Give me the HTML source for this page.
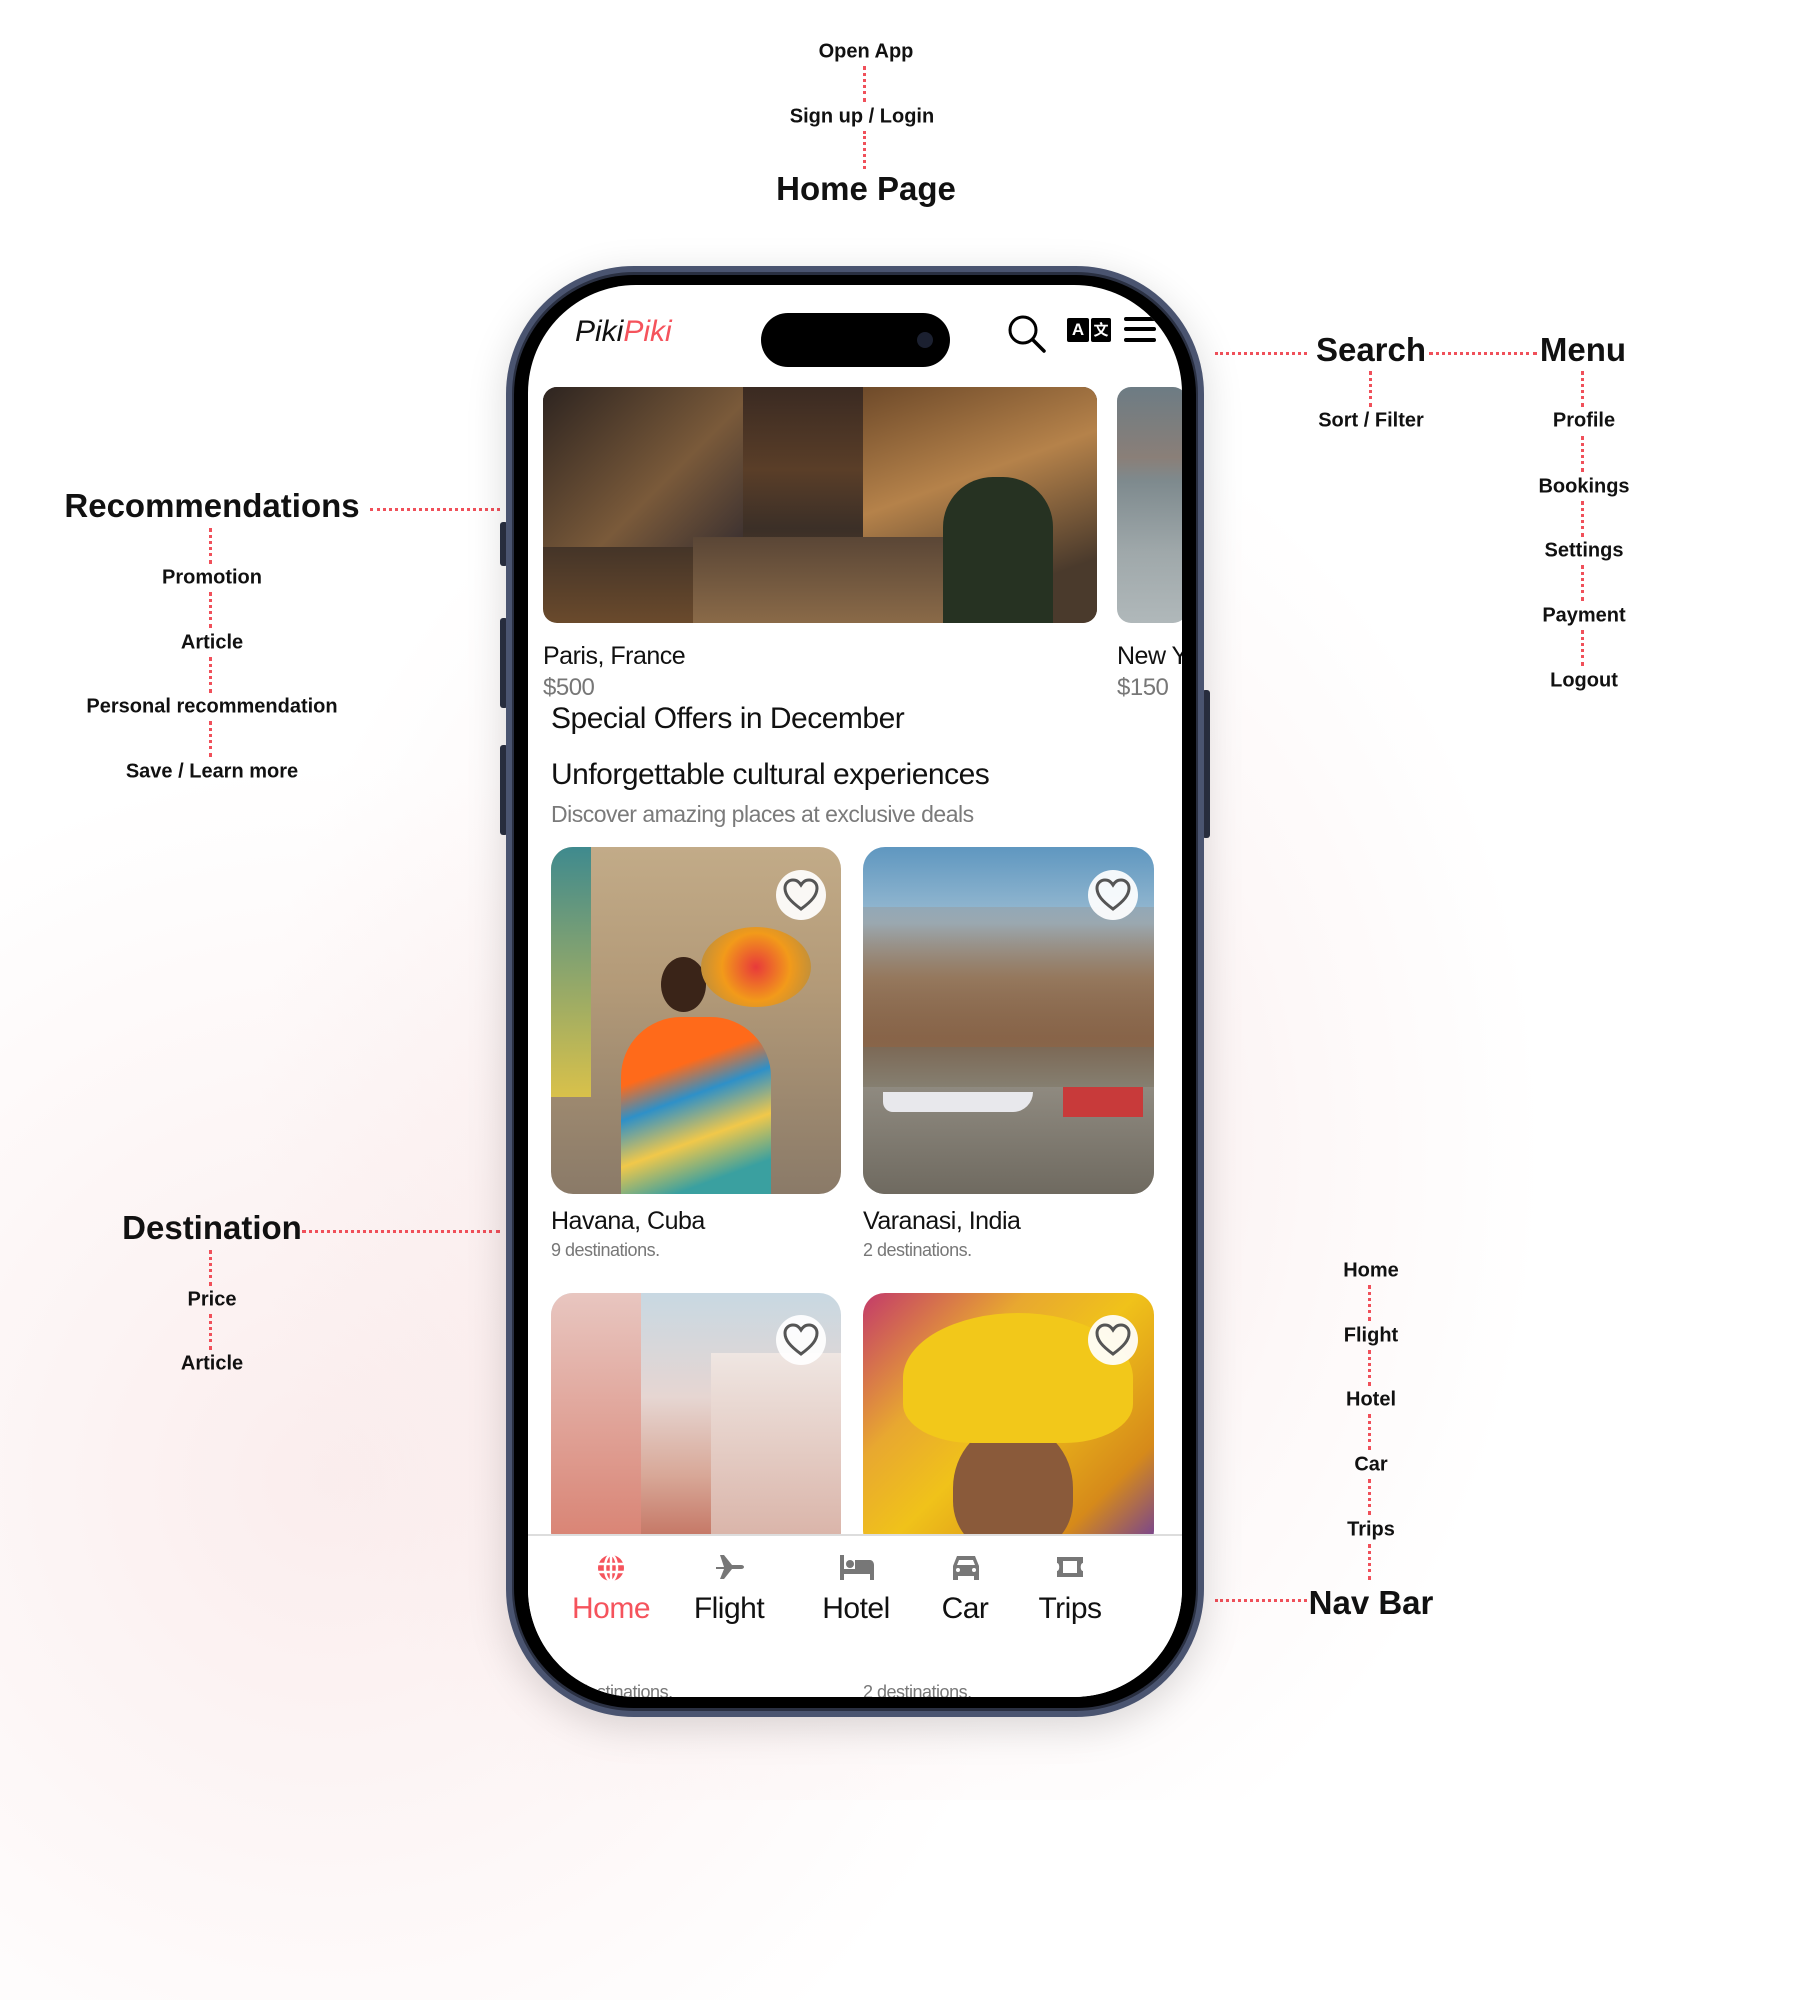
<!DOCTYPE html>
<html><head><meta charset="utf-8"><style>
*{margin:0;padding:0;box-sizing:border-box}
body{width:1800px;height:1800px;position:relative;overflow:hidden;background:#fff;font-family:"Liberation Sans",sans-serif}
.glow{position:absolute;left:250px;top:350px;width:1300px;height:1450px;background:radial-gradient(ellipse at 50% 55%,rgba(240,200,200,.45),rgba(245,220,220,.2) 45%,rgba(255,255,255,0) 70%)}
.glow2{position:absolute;left:-300px;top:700px;width:1400px;height:1300px;background:radial-gradient(ellipse at 45% 60%,rgba(245,215,215,.45),rgba(255,255,255,0) 65%)}
.t{position:absolute;transform:translate(-50%,-50%);white-space:nowrap;color:#111;font-weight:bold}
.s{font-size:20px}
.h{font-size:33px}
.vd{position:absolute;width:3px;border-left:3px dotted #f0505a}
.hd{position:absolute;height:3px;border-top:3px dotted #f0505a}
.phone{position:absolute;left:506px;top:266px;width:698px;height:1451px;border-radius:128px;background:#2a3042;border:6px solid #4a5470;box-shadow:0 10px 40px rgba(0,0,0,.15)}
.bezel{position:absolute;left:514px;top:275px;width:682px;height:1433px;border-radius:120px;background:#000}
.screen{position:absolute;left:528px;top:285px;width:654px;height:1412px;border-radius:108px;background:#fff;overflow:hidden}
.screen *{position:absolute}
.btn{position:absolute;background:#2a3042;width:8px;border-radius:3px}
.ui{font-family:"Liberation Sans",sans-serif;letter-spacing:-.5px;white-space:nowrap}
.heart{width:50px;height:50px;border-radius:50%;background:rgba(255,255,255,.92)}
</style></head><body>
<div class="glow2"></div>
<div class="glow"></div>

<div class="t s" style="left:866px;top:52px">Open App</div>
<div class="vd" style="left:863px;top:66px;height:36px"></div>
<div class="t s" style="left:862px;top:117px">Sign up / Login</div>
<div class="vd" style="left:863px;top:131px;height:38px"></div>
<div class="t h" style="left:866px;top:189px">Home Page</div>

<div class="t h" style="left:1371px;top:350px">Search</div>
<div class="t h" style="left:1583px;top:350px">Menu</div>
<div class="hd" style="left:1215px;top:352px;width:92px"></div>
<div class="hd" style="left:1429px;top:352px;width:108px"></div>
<div class="vd" style="left:1369px;top:371px;height:36px"></div>
<div class="t s" style="left:1371px;top:421px">Sort / Filter</div>
<div class="vd" style="left:1581px;top:371px;height:36px"></div>
<div class="t s" style="left:1584px;top:421px">Profile</div>
<div class="vd" style="left:1581px;top:436px;height:36px"></div>
<div class="t s" style="left:1584px;top:487px">Bookings</div>
<div class="vd" style="left:1581px;top:501px;height:36px"></div>
<div class="t s" style="left:1584px;top:551px">Settings</div>
<div class="vd" style="left:1581px;top:565px;height:36px"></div>
<div class="t s" style="left:1584px;top:616px">Payment</div>
<div class="vd" style="left:1581px;top:630px;height:36px"></div>
<div class="t s" style="left:1584px;top:681px">Logout</div>

<div class="t h" style="left:212px;top:506px">Recommendations</div>
<div class="hd" style="left:370px;top:508px;width:130px"></div>
<div class="vd" style="left:209px;top:528px;height:36px"></div>
<div class="t s" style="left:212px;top:578px">Promotion</div>
<div class="vd" style="left:209px;top:592px;height:36px"></div>
<div class="t s" style="left:212px;top:643px">Article</div>
<div class="vd" style="left:209px;top:657px;height:36px"></div>
<div class="t s" style="left:212px;top:707px">Personal recommendation</div>
<div class="vd" style="left:209px;top:721px;height:36px"></div>
<div class="t s" style="left:212px;top:772px">Save / Learn more</div>

<div class="t h" style="left:212px;top:1228px">Destination</div>
<div class="hd" style="left:302px;top:1230px;width:198px"></div>
<div class="vd" style="left:209px;top:1250px;height:36px"></div>
<div class="t s" style="left:212px;top:1300px">Price</div>
<div class="vd" style="left:209px;top:1314px;height:36px"></div>
<div class="t s" style="left:212px;top:1364px">Article</div>

<div class="t s" style="left:1371px;top:1271px">Home</div>
<div class="vd" style="left:1368px;top:1285px;height:36px"></div>
<div class="t s" style="left:1371px;top:1336px">Flight</div>
<div class="vd" style="left:1368px;top:1350px;height:36px"></div>
<div class="t s" style="left:1371px;top:1400px">Hotel</div>
<div class="vd" style="left:1368px;top:1414px;height:36px"></div>
<div class="t s" style="left:1371px;top:1465px">Car</div>
<div class="vd" style="left:1368px;top:1479px;height:36px"></div>
<div class="t s" style="left:1371px;top:1530px">Trips</div>
<div class="vd" style="left:1368px;top:1544px;height:36px"></div>
<div class="t h" style="left:1371px;top:1603px">Nav Bar</div>
<div class="hd" style="left:1215px;top:1599px;width:92px"></div>

<div class="btn" style="left:500px;top:522px;height:44px"></div>
<div class="btn" style="left:500px;top:618px;height:90px"></div>
<div class="btn" style="left:500px;top:745px;height:90px"></div>
<div class="btn" style="left:1202px;top:690px;height:148px"></div>
<div class="phone"></div>
<div class="bezel"></div>
<div class="screen">
  <div class="ui" style="left:47px;top:30px;font-size:30px;font-style:italic;letter-spacing:0"><span style="position:static;color:#111">Piki</span><span style="position:static;color:#f5535c">Piki</span></div>
  <div style="left:233px;top:28px;width:189px;height:54px;border-radius:27px;background:#000"></div>
  <div style="left:389px;top:47px;width:16px;height:16px;border-radius:50%;background:#1b2030"></div>
  <svg style="left:478px;top:28px" width="44" height="44" viewBox="0 0 44 44"><circle cx="17" cy="17" r="13" fill="none" stroke="#000" stroke-width="3"/><path d="M27 27 L38 38" stroke="#000" stroke-width="3.5" stroke-linecap="round"/></svg>
  <div style="left:539px;top:33px;width:22px;height:24px;background:#000;border-radius:2px;color:#fff;font:bold 17px 'Liberation Sans';text-align:center;line-height:24px">A</div>
  <div style="left:563px;top:33px;width:20px;height:24px;background:#000;border-radius:2px;color:#fff;font:bold 15px 'Noto Sans CJK SC',sans-serif;text-align:center;line-height:24px">文</div>
  <div style="left:596px;top:32px;width:32px;height:4px;background:#000;border-radius:2px"></div>
  <div style="left:596px;top:42px;width:32px;height:4px;background:#000;border-radius:2px"></div>
  <div style="left:596px;top:53px;width:32px;height:4px;background:#000;border-radius:2px"></div>

  <div style="left:15px;top:102px;width:554px;height:236px;border-radius:14px;overflow:hidden;background:linear-gradient(180deg,#3a2a22 0%,#5a3e28 35%,#3b2f27 60%,#6a4a2c 100%)">
    <div style="left:0;top:0;width:200px;height:160px;background:linear-gradient(135deg,#2d2420,#7a5a3a 60%,#3a3030)"></div>
    <div style="left:320px;top:0;width:234px;height:236px;background:linear-gradient(160deg,#6e4a2a,#b5824a 40%,#4a3a2c 80%)"></div>
    <div style="left:150px;top:150px;width:260px;height:86px;background:linear-gradient(180deg,#5a4636,#8a6a48)"></div>
    <div style="left:400px;top:90px;width:110px;height:146px;border-radius:50px 50px 0 0;background:#263222"></div>
  </div>
  <div style="left:589px;top:102px;width:70px;height:236px;border-radius:14px;overflow:hidden;background:linear-gradient(180deg,#6d7c84 0%,#8a7f78 30%,#7e8a8e 40%,#9fa8aa 70%,#b0b8ba 100%)"></div>

  <div class="ui" style="left:15px;top:357px;font-size:25px;color:#111">Paris, France</div>
  <div class="ui" style="left:15px;top:389px;font-size:24px;color:#777">$500</div>
  <div class="ui" style="left:589px;top:357px;font-size:25px;color:#111">New Y</div>
  <div class="ui" style="left:589px;top:389px;font-size:24px;color:#777">$150</div>
  <div class="ui" style="left:23px;top:417px;font-size:30px;color:#111">Special Offers in December</div>
  <div class="ui" style="left:23px;top:473px;font-size:30px;color:#111">Unforgettable cultural experiences</div>
  <div class="ui" style="left:23px;top:516px;font-size:23px;color:#7a7a7a">Discover amazing places at exclusive deals</div>

  <div style="left:23px;top:562px;width:290px;height:347px;border-radius:22px;overflow:hidden;background:linear-gradient(180deg,#c2ab88 0%,#b39a78 40%,#8a7a68 100%)">
    <div style="left:0;top:0;width:40px;height:250px;background:linear-gradient(180deg,#3f8a8e,#d9c14a)"></div>
    <div style="left:70px;top:170px;width:150px;height:177px;border-radius:60px 60px 0 0;background:linear-gradient(160deg,#ff6a1a 0%,#ff6a1a 30%,#2e90c8 45%,#f1c84a 65%,#3aa0a0 85%)"></div>
    <div style="left:110px;top:110px;width:45px;height:55px;border-radius:50%;background:#3a2418"></div>
    <div style="left:150px;top:80px;width:110px;height:80px;border-radius:50%;background:radial-gradient(circle,#e83a3a,#f29a1a 50%,#a88a4a)"></div>
  </div>
  <div class="heart" style="left:248px;top:585px"></div>
  <svg style="left:254px;top:592px" width="38" height="36" viewBox="0 0 38 36"><path d="M19 32 C8 24 3 18 3 11 C3 6 7 3 11 3 C15 3 17 5 19 8 C21 5 23 3 27 3 C31 3 35 6 35 11 C35 18 30 24 19 32Z" fill="none" stroke="#555" stroke-width="3"/></svg>

  <div style="left:335px;top:562px;width:291px;height:347px;border-radius:22px;overflow:hidden;background:linear-gradient(180deg,#5f97c0 0%,#9bbcd2 22%,#9a8870 38%,#7a6450 55%,#8a8a7e 75%,#6b6a5e 100%)">
    <div style="left:0;top:60px;width:291px;height:140px;background:linear-gradient(180deg,rgba(160,120,90,.2),rgba(140,100,70,.8))"></div>
    <div style="left:0;top:240px;width:291px;height:107px;background:linear-gradient(180deg,#8f8a80,#6f6a60)"></div>
    <div style="left:20px;top:245px;width:150px;height:20px;background:#e8e8ec;border-radius:0 0 40px 20px"></div>
    <div style="left:200px;top:240px;width:80px;height:30px;background:#c83a3a"></div>
  </div>
  <div class="heart" style="left:560px;top:585px"></div>
  <svg style="left:566px;top:592px" width="38" height="36" viewBox="0 0 38 36"><path d="M19 32 C8 24 3 18 3 11 C3 6 7 3 11 3 C15 3 17 5 19 8 C21 5 23 3 27 3 C31 3 35 6 35 11 C35 18 30 24 19 32Z" fill="none" stroke="#555" stroke-width="3"/></svg>

  <div class="ui" style="left:23px;top:922px;font-size:25px;color:#111">Havana, Cuba</div>
  <div class="ui" style="left:23px;top:955px;font-size:18px;color:#777">9 destinations.</div>
  <div class="ui" style="left:335px;top:922px;font-size:25px;color:#111">Varanasi, India</div>
  <div class="ui" style="left:335px;top:955px;font-size:18px;color:#777">2 destinations.</div>

  <div style="left:23px;top:1008px;width:290px;height:260px;border-radius:22px;overflow:hidden;background:linear-gradient(180deg,#c8d8e2 0%,#e6d6d2 40%,#d8a898 70%,#c06a58 100%)">
    <div style="left:0;top:0;width:90px;height:260px;background:linear-gradient(180deg,#e8c6c0,#d88070)"></div>
    <div style="left:160px;top:60px;width:130px;height:200px;background:linear-gradient(180deg,#efe6e2,#d8b0a4)"></div>
  </div>
  <div class="heart" style="left:248px;top:1030px"></div>
  <svg style="left:254px;top:1037px" width="38" height="36" viewBox="0 0 38 36"><path d="M19 32 C8 24 3 18 3 11 C3 6 7 3 11 3 C15 3 17 5 19 8 C21 5 23 3 27 3 C31 3 35 6 35 11 C35 18 30 24 19 32Z" fill="none" stroke="#555" stroke-width="3"/></svg>
  <div style="left:335px;top:1008px;width:291px;height:260px;border-radius:22px;overflow:hidden;background:linear-gradient(135deg,#c33a6a 0%,#e8a830 30%,#f0c21a 50%,#d68a1a 80%,#6a3aa0 100%)">
    <div style="left:90px;top:130px;width:120px;height:130px;border-radius:50% 50% 40% 40%;background:#8a5a3a"></div>
    <div style="left:40px;top:20px;width:230px;height:130px;border-radius:50% 50% 30% 30%;background:#f2c81a"></div>
  </div>
  <div class="heart" style="left:560px;top:1030px"></div>
  <svg style="left:566px;top:1037px" width="38" height="36" viewBox="0 0 38 36"><path d="M19 32 C8 24 3 18 3 11 C3 6 7 3 11 3 C15 3 17 5 19 8 C21 5 23 3 27 3 C31 3 35 6 35 11 C35 18 30 24 19 32Z" fill="none" stroke="#555" stroke-width="3"/></svg>

  <div style="left:0;top:1249px;width:654px;height:170px;background:#fff;border-top:2px solid #ddd"></div>
  <svg style="left:68px;top:1268px" width="30" height="30" viewBox="0 0 30 30"><circle cx="15" cy="15" r="13" fill="#f5535c"/><path d="M2 11H28M2 19H28M15 2V28" stroke="#fff" stroke-width="2.5"/><ellipse cx="15" cy="15" rx="6" ry="13" fill="none" stroke="#fff" stroke-width="2.5"/></svg>
  <svg style="left:184px;top:1267px" width="34" height="30" viewBox="0 0 34 30"><path d="M4 15 L12 15 L8 3 L12 3 L20 13 L29 13 C33 13 33 17 29 17 L20 17 L12 27 L8 27 L12 17 L4 17 Z" fill="#777"/></svg>
  <svg style="left:311px;top:1267px" width="36" height="30" viewBox="0 0 36 30"><rect x="1" y="3" width="4" height="25" fill="#777"/><circle cx="11" cy="12" r="4" fill="#777"/><path d="M16 8 H31 C33 8 35 10 35 13 V28 H31 V22 H5 V17 H16 Z" fill="#777"/></svg>
  <svg style="left:423px;top:1268px" width="30" height="28" viewBox="0 0 30 28"><path d="M6 3 H24 L28 13 V27 H23 V23 H7 V27 H2 V13 Z" fill="#777"/><path d="M8 7 H22 L24 12 H6Z" fill="#fff"/><circle cx="7" cy="17" r="2" fill="#fff"/><circle cx="23" cy="17" r="2" fill="#fff"/></svg>
  <svg style="left:527px;top:1270px" width="30" height="24" viewBox="0 0 30 24"><path d="M2 2 H28 V8 C25 8 25 16 28 16 V22 H2 V16 C5 16 5 8 2 8 Z" fill="#777"/><rect x="8" y="6" width="14" height="12" fill="#fff"/></svg>
  <div class="ui" style="left:83px;top:1307px;font-size:30px;color:#f5535c;transform:translateX(-50%)">Home</div>
  <div class="ui" style="left:201px;top:1307px;font-size:30px;color:#111;transform:translateX(-50%)">Flight</div>
  <div class="ui" style="left:328px;top:1307px;font-size:30px;color:#111;transform:translateX(-50%)">Hotel</div>
  <div class="ui" style="left:437px;top:1307px;font-size:30px;color:#111;transform:translateX(-50%)">Car</div>
  <div class="ui" style="left:542px;top:1307px;font-size:30px;color:#111;transform:translateX(-50%)">Trips</div>
  <div class="ui" style="left:50px;top:1397px;font-size:18px;color:#777">destinations.</div>
  <div class="ui" style="left:335px;top:1397px;font-size:18px;color:#777">2 destinations.</div>
</div>
</body></html>
